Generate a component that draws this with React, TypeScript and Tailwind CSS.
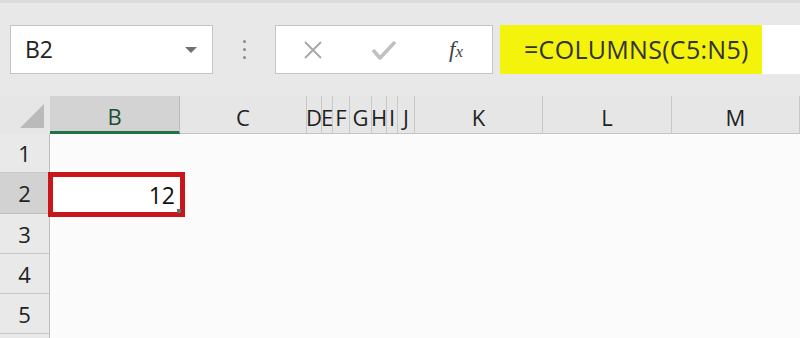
import React from "react";

const cols: { l: string; w: number; sel?: boolean }[] = [
  { l: "B", w: 130, sel: true },
  { l: "C", w: 127 },
  { l: "D", w: 15 },
  { l: "E", w: 11 },
  { l: "F", w: 17 },
  { l: "G", w: 22 },
  { l: "H", w: 15 },
  { l: "I", w: 11 },
  { l: "J", w: 17 },
  { l: "K", w: 128 },
  { l: "L", w: 129 },
  { l: "M", w: 128 },
];

const rowHeights = [39, 41, 40, 40, 40];

function Corner() {
  return (
    <div className="w-[50px] h-[38px] shrink-0 bg-[#e6e6e6] flex items-end justify-end pr-[6px] pb-[6px]">
      <div className="w-[24px] h-[24px] bg-[#bababa] [clip-path:polygon(100%_0,100%_100%,0_100%)]" />
    </div>
  );
}

export default function App() {
  return (
    <div
      className="w-[800px] h-[338px] overflow-hidden bg-[#fbfbfb] flex flex-col"
      style={{ fontFamily: '"Open Sans", "Noto Sans", sans-serif' }}
    >
      {/* top formula bar */}
      <div className="h-[96px] bg-[#e8e8e8] border-t-[3px] border-[#dcdcdc] flex items-start pt-[22px] pl-[10px] shrink-0">
        <div className="w-[203px] h-[49px] bg-white border border-[#c4c4c4] flex items-center justify-between pl-[14px] pr-[14px]">
          <span className="text-[23px] text-[#222] leading-none">B2</span>
          <svg width="14" height="8" viewBox="0 0 14 8">
            <path d="M1 1 L13 1 L7 7 Z" fill="#707070" />
          </svg>
        </div>
        <div className="w-[62px] h-[49px] flex flex-col items-center justify-center gap-[5px]">
          <div className="w-[3px] h-[3px] rounded-full bg-[#888]" />
          <div className="w-[3px] h-[3px] rounded-full bg-[#888]" />
          <div className="w-[3px] h-[3px] rounded-full bg-[#888]" />
        </div>
        <div className="w-[218px] h-[49px] bg-white border border-[#c4c4c4] flex items-center">
          <div className="w-[72px] flex justify-center pl-[2px]">
            <svg width="22" height="22" viewBox="0 0 22 22">
              <path d="M3 3 L19 19 M19 3 L3 19" stroke="#a8a8a8" strokeWidth="2" fill="none" />
            </svg>
          </div>
          <div className="w-[72px] flex justify-center">
            <svg width="26" height="22" viewBox="0 0 26 22">
              <path d="M2 11 L9 19 L24 3" stroke="#c0c0c0" strokeWidth="3.5" fill="none" strokeLinejoin="round" />
            </svg>
          </div>
          <div className="w-[72px] flex justify-center">
            <span
              className="text-[23px] text-[#444] italic leading-none"
              style={{ fontFamily: '"Liberation Serif", "DejaVu Serif", serif' }}
            >
              f<span className="text-[17px]">x</span>
            </span>
          </div>
        </div>
        <div className="ml-[7px] flex-1 h-[49px] bg-white flex">
          <div className="w-[262px] h-full bg-[#f3f30b] flex items-center pl-[24px]">
            <span className="text-[25px] text-[#333] leading-none tracking-[0.3px]">=COLUMNS(C5:N5)</span>
          </div>
        </div>
      </div>

      {/* column header row */}
      <div className="h-[38px] bg-[#e6e6e6] flex shrink-0">
        <Corner />
        {cols.map((c) => (
          <div
            key={c.l}
            style={{ width: c.w }}
            className={
              c.sel
                ? "h-full shrink-0 bg-[#d3d3d3] border-r border-[#bcbcbc] border-b-[3px] border-b-[#217346] flex items-center justify-center pt-[5px] overflow-visible"
                : "h-full shrink-0 border-r border-[#c8c8c8] border-b border-b-[#c4c4c4] flex items-center justify-center pt-[5px] overflow-visible"
            }
          >
            <span
              className={
                c.sel
                  ? "text-[22px] text-[#1b4e30] leading-none"
                  : "text-[22px] text-[#222] leading-none whitespace-nowrap"
              }
            >
              {c.l}
            </span>
          </div>
        ))}
      </div>

      {/* grid rows */}
      <div className="flex flex-1">
        <div className="w-[50px] flex flex-col bg-[#e9e9e9] border-r border-[#bdbdbd]">
          {rowHeights.map((h, i) => (
            <div
              key={i}
              style={{ height: h }}
              className={
                i === 1
                  ? "bg-[#d2d2d2] border-b border-[#bfbfbf] flex items-center justify-center"
                  : "border-b border-[#c8c8c8] flex items-center justify-center"
              }
            >
              <span className="text-[22px] text-[#222] leading-none">{i + 1}</span>
            </div>
          ))}
        </div>
        <div className="flex-1 flex flex-col">
          <div style={{ height: 38 }} />
          <div className="relative ml-[-2px] w-[137px] h-[45px] border-[5px] border-[#c8161d] bg-white flex items-center justify-end pr-[5px] pt-[2px]">
            <span className="text-[23px] text-[#111] leading-none">12</span>
            <div className="absolute right-[-1px] bottom-[-1px] w-[4px] h-[4px] bg-[#6d6d6d]" />
          </div>
        </div>
      </div>
    </div>
  );
}
